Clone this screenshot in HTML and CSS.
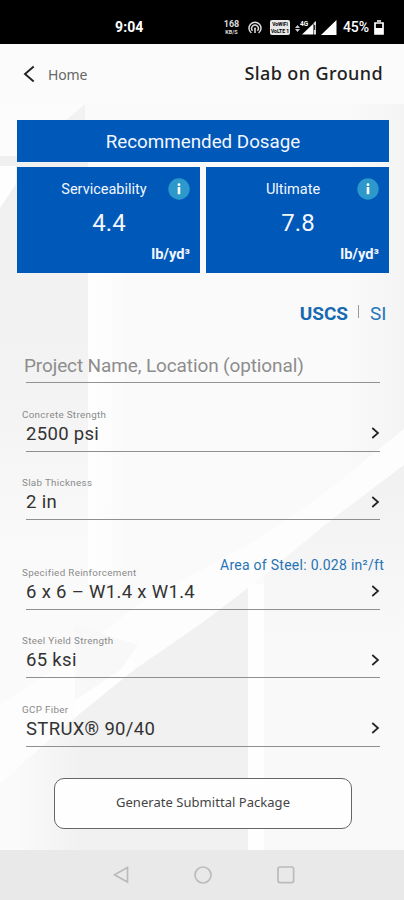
FILE: index.html
```
<!DOCTYPE html>
<html lang="en">
<head>
<meta charset="utf-8">
<title>Slab on Ground</title>
<link rel="stylesheet" href="styles.css">
</head>
<body>
<div class="phone">
  <header class="status">
    <span class="clock">9:04</span>
    <div class="status-icons">
      <span class="speed"><b>168</b><small>KB/S</small></span>
      <svg class="hotspot" width="14" height="14" viewBox="0 0 14 14" fill="none" stroke="#ddd" stroke-width="1.5"><path d="M3.4 12A6 6 0 1 1 10.6 12"/><path d="M4.6 9.7A3.3 3.3 0 1 1 9.4 9.7"/><circle cx="7" cy="7.5" r="1" fill="#ddd" stroke="none"/><path d="M7 8v4"/></svg>
      <span class="volte"><b>VoWiFi</b><b>VoLTE 1</b></span>
      <svg class="signal-data" width="22" height="16" viewBox="0 0 22 16"><path d="M0 8L2.5 5L5 8zM0 9H5L2.5 12z" fill="#ccc"/><path d="M7 14.5L18 4V14.5z" fill="#fff"/><path d="M18.5 3L21 1V14.5H18.5z" fill="#ddd"/><path d="M19.7 5v5" stroke="#000"/><text x="5" y="6" class="net">4G</text></svg>
      <svg class="signal" width="16" height="15" viewBox="0 0 16 15"><path d="M0 15L15.5 0V15z" fill="#fff"/></svg>
      <span class="percent">45%</span>
      <svg class="battery" width="10" height="15" viewBox="0 0 10 15"><path d="M3 1h4M1 3h8v11H1z" fill="none" stroke="#fff" stroke-width="1.7"/><path d="M1 8h8v6H1z" fill="#fff"/></svg>
    </div>
  </header>

  <nav class="topbar">
    <a class="back"><svg width="12" height="18" viewBox="0 0 12 18"><path d="M10.7 1.5L2 9L10.7 16.5" fill="none" stroke="#222" stroke-width="1.9"/></svg><span class="back-label">Home</span></a>
    <h1 class="title">Slab on Ground</h1>
  </nav>

  <main class="content">
    <svg class="backdrop" width="404" height="746" viewBox="0 0 404 746" aria-hidden="true">
      <defs>
        <linearGradient id="wall" x1="0" y1="0" x2="0" y2="1"><stop offset="0" stop-color="#f0f0f0"/><stop offset=".6" stop-color="#f3f3f3"/><stop offset="1" stop-color="#fafafa"/></linearGradient>
        <linearGradient id="edge" x1="0" y1="0" x2="1" y2="0"><stop offset="0" stop-color="#f4f4f4" stop-opacity="0"/><stop offset="1" stop-color="#f4f4f4"/></linearGradient>
        <linearGradient id="shade" x1="0" y1="0" x2="0" y2="1"><stop offset="0" stop-color="#f1f1f1"/><stop offset="1" stop-color="#f9f9f9"/></linearGradient>
        <linearGradient id="stripe" x1="0" y1="0" x2="1" y2="0"><stop offset="0" stop-color="#fefefe"/><stop offset="1" stop-color="#fefefe" stop-opacity="0"/></linearGradient>
        <linearGradient id="corner" x1="0" y1="0" x2="1" y2="0"><stop offset="0" stop-color="#fafafa"/><stop offset="1" stop-color="#f1f1f1"/></linearGradient>
      </defs>
      <path d="M0 0H404V746H0z" fill="#fafafa"/>
      <path d="M0 52H88V450H0z" fill="url(#wall)"/>
      <path d="M0 0H85L68 52H0z" fill="#fcfcfc"/>
      <path d="M66 16L85 0V16z" fill="#f2f2f2"/>
      <path d="M0 62H16V80L0 104z" fill="#fefefe"/>
      <path d="M88 168H130V480H88z" fill="url(#stripe)"/>
      <path d="M344 0H404V325L344 372z" fill="url(#edge)"/>
      <path d="M404 325L330 385L260 434L138 500L75 552L0 600V680L18 664L82 608L134 566L202 519L248 484L302 440L330 417L404 361z" fill="#fdfdfd"/>
      <path d="M75 521L138 541L134 566L75 600z" fill="#f8f8f8"/>
      <path d="M138 541L120 566L75 596V614L134 566z" fill="#fefefe"/>
      <path d="M404 361L330 417L302 440L264 472V540H404z" fill="url(#shade)"/>
      <path d="M264 540H404V746H264z" fill="#f9f9f9"/>
      <path d="M248 484L202 519L134 566L82 608L18 664L50 700L70 746H248z" fill="#f1f1f1"/>
      <path d="M18 664L82 608V746H18z" fill="url(#corner)"/>
      <path d="M248 480H264V746H248z" fill="#fefefe"/>
    </svg>

    <section class="dosage">
      <h2 class="dosage-title">Recommended Dosage</h2>
      <div class="cards">
        <article class="card">
          <span class="card-name">Serviceability</span><i class="info"><svg width="22" height="22" viewBox="0 0 22 22"><circle cx="11" cy="11" r="10.7" fill="#2c98cc"/><path d="M9.7 9h2.6v7.2H9.7z" fill="#fff"/><circle cx="11" cy="6.7" r="1.4" fill="#fff"/></svg></i>
          <strong class="card-value">4.4</strong>
          <span class="card-unit">lb/yd³</span>
        </article>
        <article class="card">
          <span class="card-name">Ultimate</span><i class="info"><svg width="22" height="22" viewBox="0 0 22 22"><circle cx="11" cy="11" r="10.7" fill="#2c98cc"/><path d="M9.7 9h2.6v7.2H9.7z" fill="#fff"/><circle cx="11" cy="6.7" r="1.4" fill="#fff"/></svg></i>
          <strong class="card-value">7.8</strong>
          <span class="card-unit">lb/yd³</span>
        </article>
      </div>
    </section>

    <div class="units"><b class="unit-active">USCS</b><span class="unit-divider"></span><span class="unit-other">SI</span></div>

    <form class="form">
      <div class="project">Project Name, Location (optional)</div>
      <div class="field"><span class="label">Concrete Strength</span><div class="row"><span>2500 psi</span><svg class="chevron" width="9" height="12" viewBox="0 0 9 12"><path d="M1.3 1L7 6L1.3 11"/></svg></div></div>
      <div class="field"><span class="label">Slab Thickness</span><div class="row"><span>2 in</span><svg class="chevron" width="9" height="12" viewBox="0 0 9 12"><path d="M1.3 1L7 6L1.3 11"/></svg></div></div>
      <div class="field steel"><span class="area">Area of Steel: 0.028 in²/ft</span><span class="label">Specified Reinforcement</span><div class="row"><span>6 x 6 – W1.4 x W1.4</span><svg class="chevron" width="9" height="12" viewBox="0 0 9 12"><path d="M1.3 1L7 6L1.3 11"/></svg></div></div>
      <div class="field"><span class="label">Steel Yield Strength</span><div class="row"><span>65 ksi</span><svg class="chevron" width="9" height="12" viewBox="0 0 9 12"><path d="M1.3 1L7 6L1.3 11"/></svg></div></div>
      <div class="field"><span class="label">GCP Fiber</span><div class="row"><span>STRUX® 90/40</span><svg class="chevron" width="9" height="12" viewBox="0 0 9 12"><path d="M1.3 1L7 6L1.3 11"/></svg></div></div>
      <button class="generate" type="button">Generate Submittal Package</button>
    </form>
  </main>

  <footer class="navbar">
    <svg width="16" height="18" viewBox="0 0 16 18"><path d="M14.5 1.5V16L1.5 8.8z"/></svg>
    <svg width="18" height="18" viewBox="0 0 18 18"><circle cx="9" cy="9" r="8"/></svg>
    <svg width="18" height="18" viewBox="0 0 18 18"><rect x="1" y="1" width="15.6" height="15.6" rx="2"/></svg>
  </footer>
</div>
</body>
</html>
```
FILE: styles.css
```
* { box-sizing: border-box; }
body { margin: 0; font-family: Roboto, sans-serif; color: #333; }
.phone { width: 404px; height: 900px; overflow: hidden; display: flex; flex-direction: column; background: #fafafa; }

.status { height: 44px; flex: none; background: #000; color: #fff; display: flex; justify-content: space-between; padding: 18px 20px 0 115px; }
.clock { font: 700 14px/19px Roboto, sans-serif; letter-spacing: .1px; }
.status-icons { display: flex; align-items: center; height: 19px; }
.speed { width: 17px; display: flex; flex-direction: column; align-items: center; color: #ddd; margin-right: 8px; }
.speed b { font-size: 9px; line-height: 10px; }
.speed small { font-size: 5.5px; line-height: 7px; font-weight: 700; }
.hotspot { margin-right: 8px; }
.volte { width: 20px; height: 15px; background: #e8e8e8; border-radius: 2px; color: #000; display: flex; flex-direction: column; align-items: center; justify-content: center; margin-right: 5px; }
.volte b { font-size: 5px; line-height: 6.5px; white-space: nowrap; }
.signal-data { margin-right: 4px; }
.net { font: 700 6.5px Roboto, sans-serif; fill: #fff; }
.signal { margin-right: 6px; }
.percent { font: 500 14px/19px Roboto, sans-serif; letter-spacing: -.1px; width: 27px; margin-right: 4px; }

.topbar { height: 60px; flex: none; background: #fbfbfb; display: flex; justify-content: space-between; align-items: center; padding: 0 21px 2px 23px; }
.back { display: flex; align-items: center; gap: 13px; padding-top: 1px; }
.back-label { font: 400 14px/20px "Noto Sans", sans-serif; color: #666; padding-top: 2px; letter-spacing: -.15px; }
.title { margin: 0; font: 500 18px/24px "Noto Sans", sans-serif; color: #222; letter-spacing: .4px; }

.content { height: 746px; flex: none; position: relative; padding: 16px 15px 0 17px; }
.backdrop { position: absolute; inset: 0; }
.dosage, .units, .form { position: relative; }
.dosage { width: 372px; }
.dosage-title { margin: 0 0 5px; height: 42px; background: #0058b9; color: #f2f7ff; font-size: 18.8px; font-weight: 400; line-height: 44px; text-align: center; }
.cards { display: grid; grid-template-columns: 183px 183px; gap: 6px; }
.card { height: 105.5px; background: #0058b9; color: #f2f7ff; display: grid; grid-template-columns: 1fr 22px; grid-template-rows: 22px 39px 22px; padding: 11px 10px 0 0; }
.card-name { font-size: 14.5px; line-height: 24px; padding-left: 23px; text-align: center; }
.info { display: block; height: 22px; }
.card-value { grid-column: 1 / -1; padding-left: 11px; text-align: center; font-size: 24px; font-weight: 400; line-height: 47px; }
.card-unit { grid-column: 1 / -1; text-align: right; font-size: 14.7px; font-weight: 700; line-height: 31px; }

.units { height: 82.5px; display: flex; align-items: center; justify-content: flex-end; padding-right: 2.5px; color: #1769b0; font-size: 19px; }
.unit-active { font-weight: 700; }
.unit-divider { width: 1px; height: 13px; background: #999; margin: 0 11px 4px 10px; }
.unit-other { color: #2575b8; }

.form { display: flex; flex-direction: column; }
.project { margin: -5px 9px 0 9px; height: 33px; border-bottom: 1px solid #929292; color: #8d8d8d; font-size: 19px; letter-spacing: -.12px; line-height: 32px; text-indent: -2px; }
.field { height: 68.5px; margin: 0 9px 0 9px; border-bottom: 1px solid #8f8f8f; display: flex; flex-direction: column; justify-content: flex-end; padding-bottom: 5px; }
.label { margin: 0 0 1px -4px; color: #8a8a8a; font-size: 9.8px; letter-spacing: .33px; line-height: 11px; }
.row { display: flex; align-items: center; justify-content: space-between; font-size: 18.5px; letter-spacing: .32px; line-height: 25px; }
.row span { position: relative; top: 1px; }
.chevron { fill: none; stroke: #222; stroke-width: 1.7; }
.steel { height: 89.5px; }
.area { align-self: flex-end; margin: 0 -4px -5px 0; color: #2674b5; font-size: 14px; letter-spacing: .27px; line-height: 14px; white-space: nowrap; }
.generate { margin: 31px 0 0 37px; width: 298px; height: 51px; border: 1px solid #666; border-radius: 10px; background: #fefefe; color: #444; font: 400 13px/20px "Noto Sans", sans-serif; letter-spacing: .04px; padding: 0 0 2px; }

.navbar { height: 50px; flex: none; background: #e9e9e9; display: flex; align-items: center; padding-left: 113px; gap: 65px; }
.navbar svg { fill: none; stroke: #bbb; stroke-width: 1.7; }
```
